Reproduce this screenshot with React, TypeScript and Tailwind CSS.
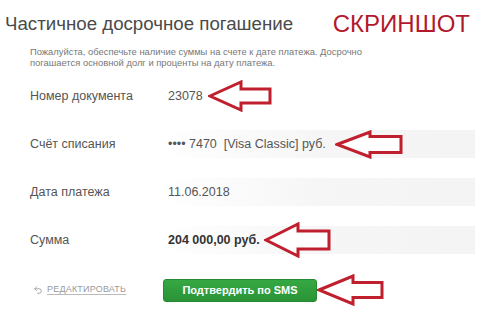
import { Undo2 } from 'lucide-react'

type ArrowProps = { w: number; h: number; head: number; shaft: number; className?: string }

// red outlined "look here" arrow pointing left
function Arrow({ w, h, head, shaft, className }: ArrowProps) {
  const m = h / 2
  const pts = [
    [2, m],
    [head, 2],
    [head, m - shaft / 2],
    [w - 2, m - shaft / 2],
    [w - 2, m + shaft / 2],
    [head, m + shaft / 2],
    [head, h - 2],
  ]
    .map((p) => p.join(','))
    .join(' ')
  return (
    <svg width={w} height={h} viewBox={`0 0 ${w} ${h}`} className={className}>
      <polygon points={pts} fill="#ffffff" stroke="#c01f2d" strokeWidth={3} strokeLinejoin="miter" />
    </svg>
  )
}

interface RowProps {
  label: string
  children: React.ReactNode
  boxed?: boolean
}

function Row({ label, children, boxed = true }: RowProps) {
  return (
    <div className="flex items-center h-[48px]">
      <div className="w-[160px] pl-[30px] text-[12.5px] text-[#555]">{label}</div>
      <div
        className={
          'flex items-center h-[28px] w-[315px] pl-[8px] text-[12.5px] text-[#555] ' +
          (boxed ? 'bg-gradient-to-r from-[#ffffff] via-[#f6f6f6] to-[#f4f4f4]' : '')
        }
      >
        {children}
      </div>
    </div>
  )
}

export default function App() {
  return (
    <div
      className="w-[480px] h-[320px] bg-white overflow-hidden"
      style={{ fontFamily: '"Liberation Sans", Arial, sans-serif' }}
    >
      <div className="flex items-center justify-between pl-[5px] pr-[10px] pt-[12px]">
        <h1 className="text-[18.7px] leading-[24px] text-[#4a4a4a]">Частичное досрочное погашение</h1>
        <span className="text-[24px] leading-[24px] text-[#b3192c]">СКРИНШОТ</span>
      </div>

      <p className="ml-[30px] mt-[10px] w-[340px] text-[9.4px] leading-[11px] text-[#777]">
        Пожалуйста, обеспечьте наличие суммы на счете к дате платежа. Досрочно погашается основной долг и проценты на
        дату платежа.
      </p>

      <div className="mt-[4px]">
        <Row label="Номер документа" boxed={false}>
          <span>23078</span>
          <Arrow w={64} h={32} head={33} shaft={14} className="ml-[5px] -my-[4px]" />
        </Row>
        <Row label="Счёт списания">
          <span className="whitespace-pre">•••• 7470  [Visa Classic] руб.</span>
          <Arrow w={68} h={29} head={35} shaft={16} className="ml-[9px] -my-[2px]" />
        </Row>
        <Row label="Дата платежа">
          <span>11.06.2018</span>
        </Row>
        <Row label="Сумма">
          <span className="font-bold text-[#333]">204 000,00 руб.</span>
          <Arrow w={67} h={36} head={34} shaft={18} className="ml-[4px] -my-[4px]" />
        </Row>
      </div>

      <div className="flex items-center h-[52px]">
        <div className="w-[163px] pl-[33px] flex items-center gap-[4px] text-[#9a9a9a]">
          <Undo2 size={10} strokeWidth={2} />
          <span className="text-[9px] tracking-[0.2px] underline underline-offset-2 decoration-[#bbb]">
            РЕДАКТИРОВАТЬ
          </span>
        </div>
        <button className="w-[154px] h-[23px] rounded-[3px] bg-gradient-to-b from-[#36a843] to-[#2a9337] border border-[#258a31] text-white text-[11px] font-bold">
          Подтвердить по SMS
        </button>
        <Arrow w={67} h={32} head={36} shaft={15} />
      </div>
    </div>
  )
}
